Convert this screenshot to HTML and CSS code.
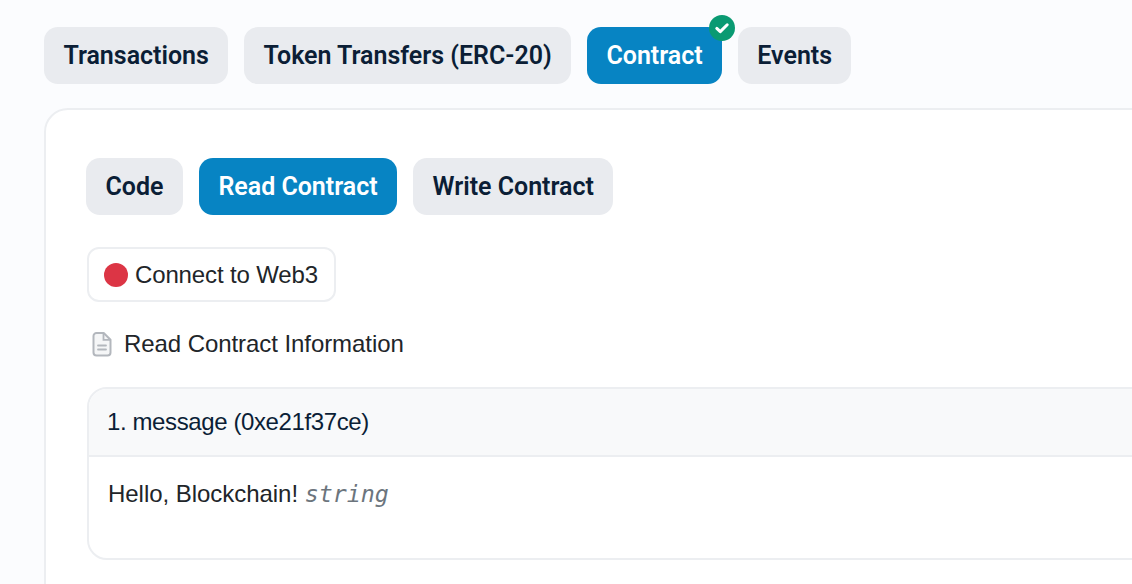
FILE: index.html
```html
<!DOCTYPE html>
<html lang="en">
<head>
<meta charset="utf-8">
<title>Contract</title>
<link rel="stylesheet" href="styles.css">
</head>
<body>
<main class="page">
  <nav class="tabs">
    <a class="pill">Transactions</a>
    <a class="pill">Token Transfers (ERC-20)</a>
    <a class="pill active has-badge">Contract
      <span class="badge">
        <svg viewBox="0 0 24 24" width="26" height="26"><circle cx="12" cy="12" r="12" fill="#0a9a72"/><path d="M7.2 12.4l3.2 3L16.8 9" fill="none" stroke="#fff" stroke-width="2.8" stroke-linecap="round" stroke-linejoin="round"/></svg>
      </span>
    </a>
    <a class="pill">Events</a>
  </nav>
  <section class="card">
    <nav class="tabs subtabs">
      <a class="pill">Code</a>
      <a class="pill active">Read Contract</a>
      <a class="pill">Write Contract</a>
    </nav>
    <button class="connect"><span class="dot"></span>Connect to Web3</button>
    <div class="info">
      <svg class="doc" viewBox="0 0 20 26" width="20" height="26"><path d="M4.5 2h7.2L18.500 8.800V21.500a3 3 0 0 1-3 3H4.500a3 3 0 0 1-3-3V5a3 3 0 0 1 3-3z" fill="#f5f6f7" stroke="#b3b7bd" stroke-width="2" stroke-linejoin="round"/><path d="M11.500 2.300V8.800H18.200" fill="none" stroke="#b3b7bd" stroke-width="1.800"/><path d="M6 14.500h8M6 18.500h8" stroke="#b3b7bd" stroke-width="1.800" stroke-linecap="round"/></svg>
      <span>Read Contract Information</span>
    </div>
    <article class="panel">
      <header class="panel-head">1. message (0xe21f37ce)</header>
      <div class="panel-body">Hello, Blockchain! <i class="type">string</i></div>
    </article>
  </section>
</main>
</body>
</html>
```
FILE: styles.css
```css
* { box-sizing: border-box; }
html, body { margin: 0; height: 100%; overflow: hidden; }
body {
  background: #fbfcfe;
  font-family: "Liberation Sans", Arial, sans-serif;
  color: #212529;
}
.page { padding: 27px 0 0 44px; width: 1132px; height: 584px; overflow: hidden; }
.tabs { display: flex; gap: 16px; }
.pill {
  position: relative;
  display: block;
  height: 57px;
  padding: 0 19.4px;
  border-radius: 14px;
  background: #e9ebef;
  color: #0b1e36;
  font: 600 25px/57px Roboto, sans-serif;
  letter-spacing: -0.02px;
  white-space: nowrap;
}
.pill.active { background: #0784c3; color: #fff; }
.subtabs .pill { padding: 0 19.5px; }
.badge { position: absolute; top: -12px; right: -13px; width: 26px; height: 26px; line-height: 0; }
.card {
  margin-top: 24px;
  width: 1200px;
  height: 600px;
  padding: 48px 0 0 40px;
  background: #fff;
  border: 2px solid #eceef1;
  border-radius: 24px;
}
.connect {
  display: flex;
  align-items: center;
  gap: 7px;
  margin: 32px 0 0 1px;
  height: 55px;
  width: 249px;
  padding: 0 0 0 15px;
  background: #fff;
  border: 2px solid #eceef1;
  border-radius: 12px;
  color: #212529;
  font: 24px "Liberation Sans", Arial, sans-serif;
  letter-spacing: -0.14px;
}
.dot { width: 24px; height: 24px; border-radius: 50%; background: #dc3545; }
.info { display: flex; align-items: center; gap: 12px; margin: 28px 0 0 6px; height: 28px; font-size: 24px; letter-spacing: -0.07px; }
.panel {
  margin: 29px 0 0 1px;
  width: 1100px;
  height: 173px;
  border: 2px solid #eceef1;
  border-radius: 20px;
  overflow: hidden;
}
.panel-head {
  height: 68px;
  padding-left: 18px;
  background: #f8f9fa;
  border-bottom: 2px solid #eceef1;
  color: #0b1e36;
  font-size: 24px;
  line-height: 65px;
  letter-spacing: -0.39px;
}
.panel-body { padding: 22px 0 0 19px; font-size: 24px; line-height: 30px; letter-spacing: -0.04px; }
.type { font: italic 23.3px "DejaVu Sans Mono", monospace; color: #6c757d; letter-spacing: 0; }
```
